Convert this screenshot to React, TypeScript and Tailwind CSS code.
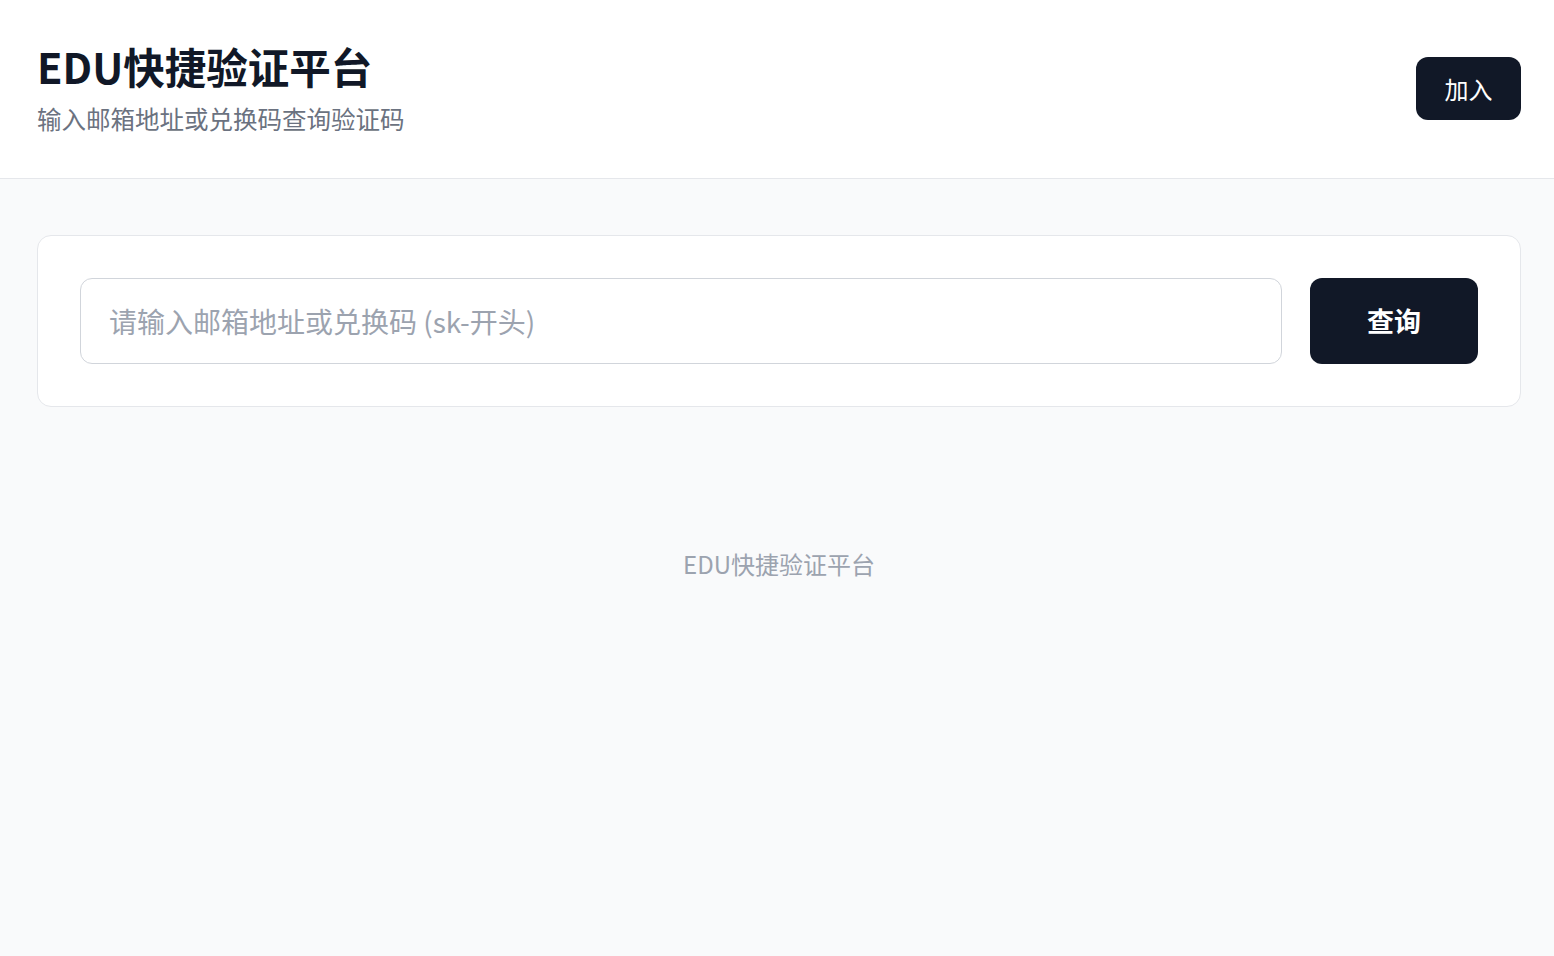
import { useState } from "react";

export default function App() {
  const [query, setQuery] = useState("");

  return (
    <div className="min-h-screen bg-[#f9fafb] font-['Noto_Sans_CJK_SC',sans-serif] text-[#111827]">
      <header className="flex items-center justify-between border-b border-[#e5e7eb] bg-white pt-[42px] pb-[43px] pl-[37px] pr-[33px]">
        <div>
          <h1 className="text-[41.5px] font-bold leading-[49px]">EDU快捷验证平台</h1>
          <p className="mt-[11px] text-[24.5px] leading-[33px] text-[#6b7280]">输入邮箱地址或兑换码查询验证码</p>
        </div>
        <button
          type="button"
          className="h-[63px] w-[105px] rounded-[12px] bg-[#111827] text-[24px] text-white"
        >
          加入
        </button>
      </header>

      <main className="pt-[56px] pl-[37px] pr-[33px]">
        <div className="flex items-center gap-[28px] rounded-[14px] border border-[#e5e7eb] bg-white p-[42px]">
          <input
            value={query}
            onChange={(e) => setQuery(e.target.value)}
            placeholder="请输入邮箱地址或兑换码 (sk-开头)"
            className="h-[86px] flex-1 rounded-[12px] border border-[#d1d5db] bg-white px-[28px] text-[28px] text-[#111827] outline-none placeholder:text-[#9ca3af]"
          />
          <button
            type="button"
            className="h-[86px] w-[168px] rounded-[12px] bg-[#111827] text-[27px] font-bold text-white"
          >
            查询
          </button>
        </div>

        <p className="mt-[141px] text-center text-[24px] leading-[32px] text-[#9ca3af]">EDU快捷验证平台</p>
      </main>
    </div>
  );
}
